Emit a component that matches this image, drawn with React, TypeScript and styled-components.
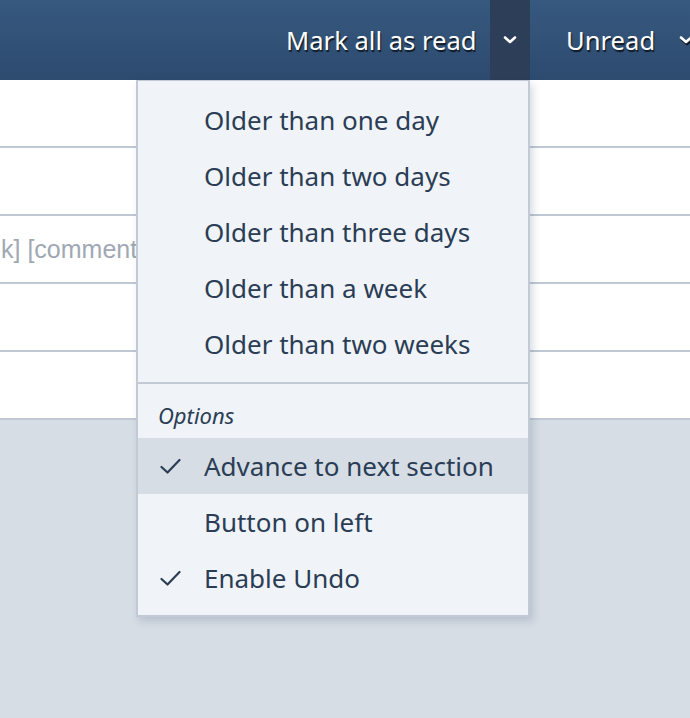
import React from 'react'
import styled, { createGlobalStyle } from 'styled-components'

const colors = {
  header: 'linear-gradient(#37597f, #2d4a6f)',
  toggle: '#2d3f58',
  text: '#2b3d55',
  menu: '#f0f4f9',
  border: '#c2cad6',
  hover: '#d6dde5',
  page: '#d6dde5',
  line: '#c0c8d4',
  muted: '#a0a8b3',
}

const markOptions = [
  'Older than one day',
  'Older than two days',
  'Older than three days',
  'Older than a week',
  'Older than two weeks',
]

const settings = [
  { label: 'Advance to next section', checked: true, active: true },
  { label: 'Button on left', checked: false, active: false },
  { label: 'Enable Undo', checked: true, active: false },
]

const rows = ['', '', 'k] [comments]', '', '']

const Chevron = () => (
  <svg width="14" height="10" viewBox="0 0 14 10">
    <path d="M2 2.5 L7 7 L12 2.5" fill="none" stroke="#fff" strokeWidth="2.6" strokeLinecap="round" strokeLinejoin="round" />
  </svg>
)

const Check = () => (
  <svg width="21" height="17" viewBox="0 0 21 17">
    <path d="M1.5 9 L7.5 14.5 L19.5 2" fill="none" stroke={colors.text} strokeWidth="2.2" strokeLinecap="round" strokeLinejoin="round" />
  </svg>
)

export default function App() {
  return (
    <Page>
      <GlobalStyle />
      <Header>
        <HeaderButton>Mark all as read</HeaderButton>
        <Toggle>
          <Chevron />
        </Toggle>
        <HeaderButton>
          Unread
          <Chevron />
        </HeaderButton>
      </Header>

      <List>
        {rows.map((text, i) => (
          <Row key={i}>{text}</Row>
        ))}
      </List>

      <Menu>
        <Group>
          {markOptions.map((label) => (
            <Item key={label}>
              <CheckSlot />
              {label}
            </Item>
          ))}
        </Group>
        <Group>
          <Caption>Options</Caption>
          {settings.map(({ label, checked, active }) => (
            <Item key={label} $active={active}>
              <CheckSlot>{checked && <Check />}</CheckSlot>
              {label}
            </Item>
          ))}
        </Group>
      </Menu>
    </Page>
  )
}

const GlobalStyle = createGlobalStyle`
  html, body {
    margin: 0;
    height: 100%;
    background: ${colors.page};
    overflow: hidden;
  }
`

const Page = styled.div`
  position: relative;
  width: 690px;
  height: 718px;
  background: ${colors.page};
  font-family: 'Noto Sans', 'Open Sans', sans-serif;
  overflow: hidden;
`

const Header = styled.div`
  height: 80px;
  padding-left: 286px;
  background: ${colors.header};
  display: flex;
  align-items: stretch;
  white-space: nowrap;
  overflow: hidden;
`

const HeaderButton = styled.div`
  display: flex;
  align-items: center;
  gap: 24px;
  padding-left: 36px;
  color: #fff;
  font-size: 25.6px;
  text-shadow: 1px 2px 1px rgba(0, 0, 0, 0.7);
  flex-shrink: 0;

  &:first-child {
    width: 190px;
    margin-right: 14px;
    padding: 0;
  }

  svg {
    filter: drop-shadow(1px 2px 0 rgba(0, 0, 0, 0.7));
  }
`

const Toggle = styled.div`
  width: 40px;
  flex-shrink: 0;
  display: flex;
  align-items: center;
  justify-content: center;
  background: ${colors.toggle};
`

const List = styled.div`
  display: flex;
  flex-direction: column;
`

const Row = styled.div`
  height: 66px;
  background: #fff;
  border-bottom: 2px solid ${colors.line};
  display: flex;
  align-items: center;
  padding-left: 1px;
  font-family: 'Liberation Sans', Arial, sans-serif;
  font-size: 25px;
  color: ${colors.muted};
  white-space: nowrap;
  overflow: hidden;
`

const Menu = styled.div`
  position: absolute;
  top: 80px;
  left: 136px;
  width: 390px;
  background: ${colors.menu};
  border: 2px solid ${colors.border};
  border-top-width: 1px;
  box-shadow: 3px 4px 8px rgba(40, 60, 90, 0.18);
  color: ${colors.text};
`

const Group = styled.div`
  padding: 11px 0 10px;

  & + & {
    border-top: 2px solid ${colors.border};
    padding: 0 0 9px;
  }
`

const Caption = styled.div`
  height: 54px;
  box-sizing: border-box;
  padding: 8px 0 0 20px;
  display: flex;
  align-items: center;
  font-size: 22px;
  font-style: italic;
`

const Item = styled.div<{ $active?: boolean }>`
  height: 56px;
  display: flex;
  align-items: center;
  padding-left: 22px;
  font-size: 26px;
  background: ${({ $active }) => ($active ? colors.hover : 'transparent')};
  white-space: nowrap;
`

const CheckSlot = styled.span`
  width: 44px;
  flex-shrink: 0;
  display: flex;
  align-items: center;
`
